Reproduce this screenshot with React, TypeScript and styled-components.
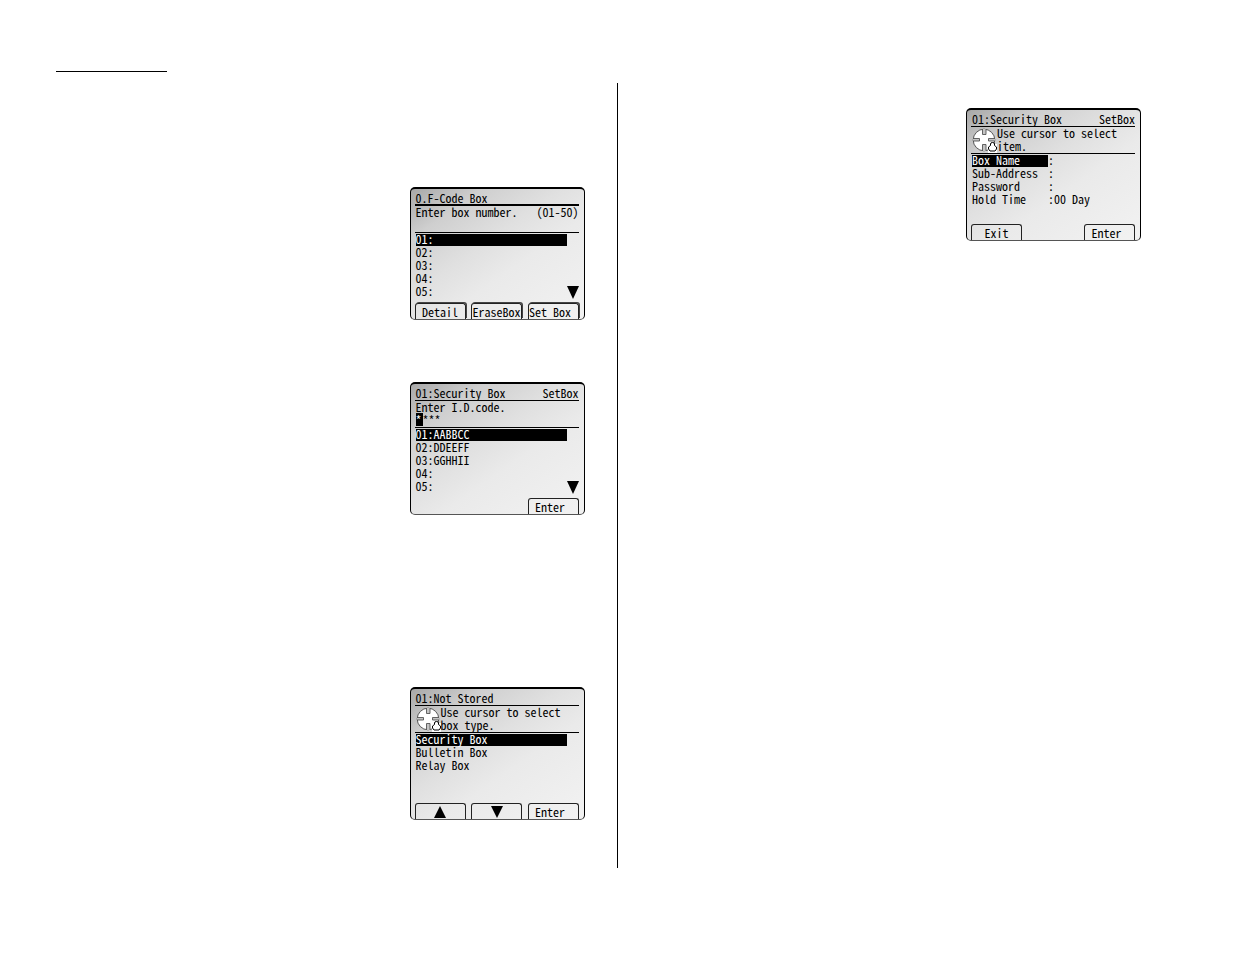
import React from "react";
import styled, { createGlobalStyle } from "styled-components";

const GlobalStyle = createGlobalStyle`
  *, *::before, *::after { box-sizing: border-box; }
  body { margin: 0; background: #fff; color: #000; }
`;

const Page = styled.main`
  padding: 71px 0 86px;
`;

const HeaderRule = styled.hr`
  width: 111px;
  height: 1px;
  margin: 0 0 11px 56px;
  border: 0;
  background: #000;
`;

const Columns = styled.div`
  display: grid;
  grid-template-columns: 1fr 1fr;
`;

const LeftColumn = styled.section`
  display: flex;
  flex-direction: column;
  align-items: flex-end;
  padding: 104px 32px 48px 0;
  border-right: 1px solid #000;
`;

const RightColumn = styled.section`
  display: flex;
  flex-direction: column;
  align-items: flex-end;
  padding: 25px 94px 0 0;
`;

const Screen = styled.article<{ $gap?: number }>`
  display: flex;
  flex-direction: column;
  width: 175px;
  height: 133px;
  margin-top: ${(p) => p.$gap ?? 0}px;
  padding: 0 5px 0 4px;
  border: 1px solid #000;
  border-top-width: 2px;
  border-bottom-color: #555;
  border-radius: 5px;
  background: linear-gradient(145deg, #a8a8a8 0%, #cfcfcf 20%, #e0e0e0 42%, #eaeaea 60%, #f2f2f2 100%);
  font-family: "Noto Sans Mono CJK JP", "Noto Sans CJK JP", monospace;
  font-size: 12px;
  font-weight: 400;
  line-height: 13px;
  white-space: pre;
`;

const TitleBar = styled.header<{ $heavy?: boolean }>`
  display: flex;
  justify-content: space-between;
  height: 17px;
  padding: 2px 0 0 1px;
  border-bottom: ${(p) => (p.$heavy ? 2 : 1)}px solid #000;
`;

const Title = styled.h2`
  margin: 0;
  font: inherit;
`;

const Message = styled.div`
  display: flex;
  height: 27px;
  padding-left: 1px;
  border-bottom: 1px solid #000;
`;

const MessageText = styled.p`
  margin: -1px 0 0;
  flex: 1;
`;

const MessageRange = styled.span`
  margin-top: -1px;
`;

const Cursor = styled.span`
  display: inline-block;
  width: 7px;
  background: #000;
  color: #fff;
`;

const Items = styled.ul`
  flex: 1;
  margin: 0;
  padding: 1px 0 0 1px;
  list-style: none;
  line-height: 10px;
`;

const Item = styled.li<{ $selected?: boolean }>`
  width: 151px;
  height: 12px;
  margin-bottom: 1px;
  background: ${(p) => (p.$selected ? "#000" : "transparent")};
  color: ${(p) => (p.$selected ? "#fff" : "#000")};
`;

const Setting = styled.li`
  display: flex;
  height: 12px;
  margin-bottom: 1px;
`;

const SettingName = styled.span<{ $selected?: boolean }>`
  width: 76px;
  background: ${(p) => (p.$selected ? "#000" : "transparent")};
  color: ${(p) => (p.$selected ? "#fff" : "#000")};
`;

const ListArea = styled.div`
  display: flex;
  flex: 1;
`;

const MoreArrow = styled.svg`
  flex: none;
  align-self: flex-end;
  width: 12px;
  height: 13px;
  margin-bottom: 4px;
`;

const Keys = styled.footer`
  display: grid;
  grid-template-columns: repeat(3, 51px);
  justify-content: space-between;
  height: 16px;
`;

const Key = styled.button<{ $raised?: boolean; $last?: boolean }>`
  display: flex;
  align-items: center;
  justify-content: center;
  grid-column: ${(p) => (p.$last ? 3 : "auto")};
  height: 16px;
  padding: 0 ${(p) => (p.$last ? 6 : 0)}px 0 0;
  border: 1px solid #222;
  border-bottom: 0;
  border-radius: 3px 3px 0 0;
  background: transparent;
  box-shadow: ${(p) => (p.$raised ? "1px -1px 0 #444" : "none")};
  color: #000;
  font: inherit;
  white-space: pre;
`;

const CursorPad = () => (
  <svg width="25" height="26" viewBox="0 0 25 26" aria-hidden="true">
    <circle cx="12" cy="13" r="10.8" fill="#fff" stroke="#444" strokeWidth="0.9" />
    <path d="M16 17h9v9h-9z" fill="#fff" />
    <path
      d="M10.500 2v5.500h3.500V2M10.500 24v-6.500h3.500V24M1 11.500h6.500v2.500H1M23 11.500h-6.500v2.500H23"
      fill="#c4c4c4"
      stroke="#555"
      strokeWidth="0.9"
    />
    <path d="M18.500 18.500v-1.500q0-1.500 2-1.500t2 1.500v1.500l2 1.500v2l-1.500 2h-5l-1.500-2v-2z" fill="#fff" stroke="#000" />
  </svg>
);

const Triangle = ({ up }: { up?: boolean }) => (
  <svg width="12" height="12" viewBox="0 0 12 12" aria-hidden="true">
    <path d={up ? "M0 12L6 0l6 12z" : "M0 0h12L6 12z"} />
  </svg>
);

const More = () => (
  <MoreArrow viewBox="0 0 12 13" aria-hidden="true">
    <path d="M0 0h12L6 13z" />
  </MoreArrow>
);

const List = ({ items }: { items: string[] }) => (
  <Items>
    {items.map((text, i) => (
      <Item key={text} $selected={i === 0}>{text}</Item>
    ))}
  </Items>
);

const settings = [
  ["Box Name", ":"],
  ["Sub-Address", ":"],
  ["Password", ":"],
  ["Hold Time", ":00 Day"],
];

export default function App() {
  return (
    <>
      <GlobalStyle />
      <Page>
        <HeaderRule />
        <Columns>
          <LeftColumn>
            <Screen>
              <TitleBar $heavy><Title>0.F-Code Box</Title></TitleBar>
              <Message>
                <MessageText>Enter box number.</MessageText>
                <MessageRange>(01-50)</MessageRange>
              </Message>
              <ListArea>
                <List items={["01:", "02:", "03:", "04:", "05:"]} />
                <More />
              </ListArea>
              <Keys>
                <Key $raised>Detail</Key>
                <Key $raised>EraseBox</Key>
                <Key $raised $last>Set Box</Key>
              </Keys>
            </Screen>

            <Screen $gap={62}>
              <TitleBar><Title>01:Security Box</Title><span>SetBox</span></TitleBar>
              <Message>
                <MessageText>Enter I.D.code.{"\n"}<Cursor>*</Cursor>***</MessageText>
              </Message>
              <ListArea>
                <List items={["01:AABBCC", "02:DDEEFF", "03:GGHHII", "04:", "05:"]} />
                <More />
              </ListArea>
              <Keys><Key $last>Enter</Key></Keys>
            </Screen>

            <Screen $gap={172}>
              <TitleBar><Title>01:Not Stored</Title></TitleBar>
              <Message>
                <CursorPad />
                <MessageText>Use cursor to select{"\n"}box type.</MessageText>
              </Message>
              <List items={["Security Box", "Bulletin Box", "Relay Box"]} />
              <Keys>
                <Key aria-label="Up"><Triangle up /></Key>
                <Key aria-label="Down"><Triangle /></Key>
                <Key $last>Enter</Key>
              </Keys>
            </Screen>
          </LeftColumn>

          <RightColumn>
            <Screen>
              <TitleBar><Title>01:Security Box</Title><span>SetBox</span></TitleBar>
              <Message>
                <CursorPad />
                <MessageText>Use cursor to select{"\n"}item.</MessageText>
              </Message>
              <Items>
                {settings.map(([name, value], i) => (
                  <Setting key={name}>
                    <SettingName $selected={i === 0}>{name}</SettingName>
                    <span>{value}</span>
                  </Setting>
                ))}
              </Items>
              <Keys><Key>Exit</Key><Key $last>Enter</Key></Keys>
            </Screen>
          </RightColumn>
        </Columns>
      </Page>
    </>
  );
}
